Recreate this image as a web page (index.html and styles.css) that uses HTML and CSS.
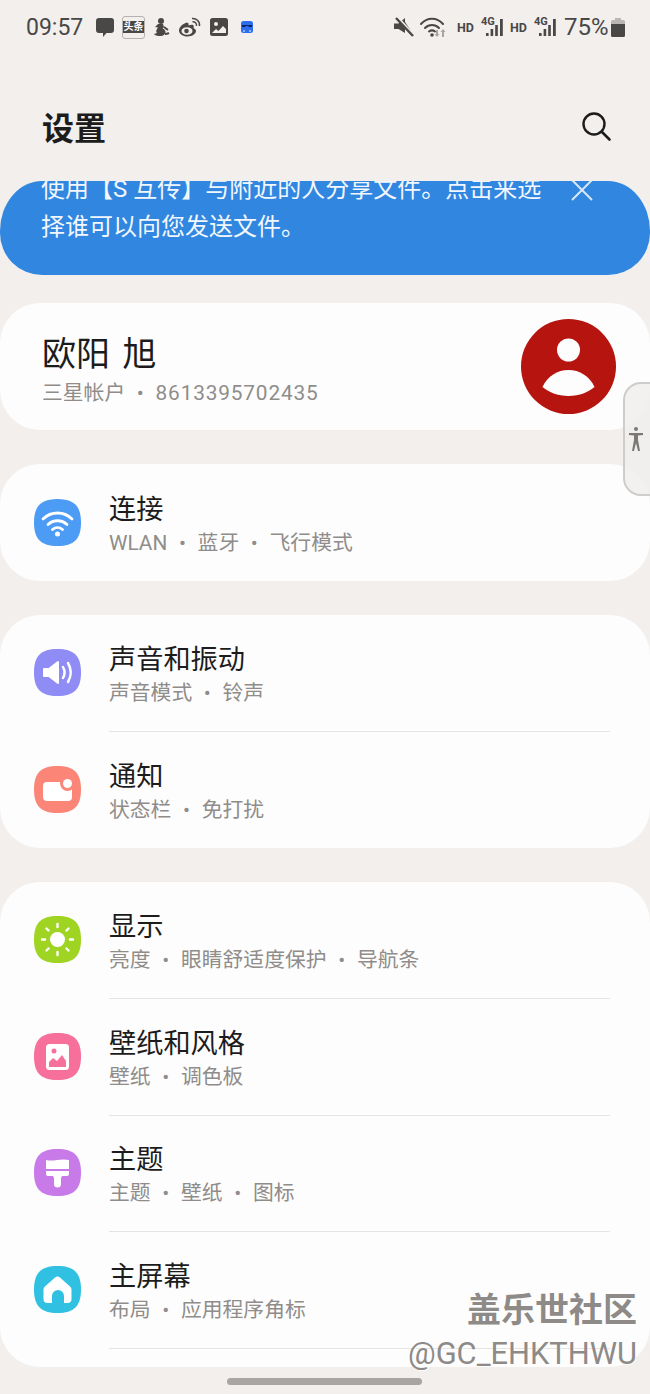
FILE: index.html
```html
<!DOCTYPE html>
<html lang="zh-CN">
<head>
  <meta charset="UTF-8" />
  <meta name="viewport" content="width=device-width, initial-scale=1.0"/>
  <title>设置</title>
  <link rel="stylesheet" href="styles.css">
</head>
<body>
  <div class="status-bar">
    <span class="time">09:57</span>
    <svg class="st-chat" width="18" height="19" viewBox="0 0 18 19"><path fill="#4a4747" d="M3 0h12a3 3 0 0 1 3 3v9a3 3 0 0 1-3 3h-4.500L7 19v-4H3a3 3 0 0 1-3-3V3a3 3 0 0 1 3-3z"/></svg>
    <span class="st-toutiao"><span>头条</span></span>
    <svg class="st-run" width="17" height="20" viewBox="0 0 17 20"><circle cx="8" cy="4" r="3" fill="#4a4747"/><path fill="#4a4747" d="M6 7h4l1 3-1.500 1.500c2 .5 3 2 3 3.500 0 2.500-2.500 4-5.500 4-2.500 0-5-.5-6-2l3-1c-1-1-1-2.500 0-4l1-1.500L2 10l3-3z"/><path fill="none" stroke="#4a4747" stroke-width="2" d="M11 10l4 3M12 17c2 0 3-.5 4-1"/></svg>
    <svg class="st-weibo" width="23" height="20" viewBox="0 0 23 20"><path fill="#4a4747" d="M9 5.500C5 6.500 1 10 1 13.500 1 17 5 19.500 9.500 19.500c5 0 8.500-3 8.500-5.500 0-2-2-2.500-2.500-3 .5-1.500.5-2.500-.5-3-1-.5-3 0-4.500.5.500-2-.5-3-1.500-2.500z"/><ellipse cx="9" cy="14" rx="5.500" ry="3.800" fill="#f2efed"/><circle cx="8.500" cy="14" r="2.300" fill="#4a4747"/><path fill="none" stroke="#4a4747" stroke-width="1.500" d="M14 1.500c4-.5 8 2.500 7.500 7.500M14.500 4.800c2.500-.3 4.300 1.500 4 4"/></svg>
    <svg class="st-image" width="18" height="18" viewBox="0 0 18 18"><rect width="18" height="18" rx="2.500" fill="#4a4747"/><circle cx="6" cy="6" r="2" fill="#f2efed"/><path fill="#f2efed" d="M2 15l4-4 2.500 2L13 8l3 3v4z"/></svg>
    <svg class="st-blue" width="12" height="12" viewBox="0 0 12 12"><rect width="12" height="12" rx="2.500" fill="#2f6df0"/><path fill="#10235e" d="M1 4h10v2H8.500L6 4.800 3.500 6H1z"/><path fill="#8fb4ff" d="M2 9h2v2H2zM8 9h2v2H8z"/></svg>
    <span class="spacer"></span>
    <svg class="st-mute" width="20" height="20" viewBox="0 0 20 20"><path fill="#4a4747" d="M0 6.500h4.500L11 1v15L4.500 12H0z"/><path fill="#4a4747" d="M11 5l6 9-2 1.500-4-5z"/><path stroke="#f2efed" stroke-width="3" d="M3 0l16 18"/><path stroke="#4a4747" stroke-width="2.400" d="M2 1l17 18"/></svg>
    <svg class="st-wifi" width="27" height="22" viewBox="0 0 27 22"><g fill="none" stroke="#4a4747" stroke-width="2" stroke-linecap="round"><path d="M1 8c6-7 16-7 22 0"/><path d="M5 12c4-4 10-4 14 0"/><path d="M9 15.500c2-1.500 4-1.500 6 0"/></g><circle cx="12" cy="19" r="1.800" fill="#4a4747"/><path fill="#a8a5a3" d="M16 14h2v4h1.500L17 21l-2.500-3H16zM22 21h2v-5h1.500L23 13l-2.500 3H22z"/></svg>
    <span class="st-hd first">HD</span>
    <span class="st-net">
      <span class="net-label">4G</span>
      <svg width="17" height="18" viewBox="0 0 17 18"><path fill="#4a4747" d="M0 15h2.600v3H0zM4.600 11h2.600v7H4.600zM9.200 7h2.600v11H9.200zM14 1h2.800v17H14z"/></svg>
    </span>
    <span class="st-hd">HD</span>
    <span class="st-net">
      <span class="net-label">4G</span>
      <svg width="17" height="18" viewBox="0 0 17 18"><path fill="#4a4747" d="M0 15h2.600v3H0zM4.600 11h2.600v7H4.600zM9.200 7h2.600v11H9.200zM14 1h2.800v17H14z"/></svg>
    </span>
    <span class="battery-text">75%</span>
    <svg class="st-battery" width="14" height="20" viewBox="0 0 14 20"><path fill="#b9b6b4" d="M4 1h6v2h2.500A1.500 1.500 0 0 1 14 4.500V8H0V4.500A1.500 1.500 0 0 1 1.500 3H4z"/><path fill="#4a4747" d="M0 7h14v11.500a1.500 1.500 0 0 1-1.500 1.500h-11A1.500 1.500 0 0 1 0 18.500z"/></svg>
  </div>

  <header class="title-row">
    <h1>设置</h1>
    <svg width="32" height="32" viewBox="0 0 32 32"><circle cx="14" cy="14" r="10.500" fill="none" stroke="#1c1c1c" stroke-width="2.400"/><path stroke="#1c1c1c" stroke-width="2.600" stroke-linecap="round" d="M22 22l7.500 7.500"/></svg>
  </header>

  <div class="banner">
    <p>使用【S 互传】与附近的人分享文件。点击来选择谁可以向您发送文件。</p>
    <svg class="banner-close" width="24" height="24" viewBox="0 0 24 24"><path stroke="#d8e8fa" stroke-width="2" d="M2 2l20 20M22 2L2 22"/></svg>
  </div>

  <section class="card profile">
    <div class="profile-text">
      <div class="profile-name">欧阳 旭</div>
      <div class="sub profile-sub">三星帐户 <i>•</i> <span class="num">8613395702435</span></div>
    </div>
    <svg width="95" height="95" viewBox="0 0 95 95"><circle cx="47.500" cy="47.500" r="47.500" fill="#b5140f"/><circle cx="47.500" cy="31" r="11.500" fill="#fdfdfd"/><path fill="#fdfdfd" d="M21.500 68c5-11 15-17 26-17s21 6 26 17c-6 5-15 9-26 9s-20-4-26-9z"/></svg>
  </section>

  <section class="card">
    <div class="row">
      <svg class="icon" viewBox="0 0 47 47"><path fill="#4c9bf5" d="M23.500 0C40 0 47 7 47 23.500S40 47 23.500 47 0 40 0 23.500 7 0 23.500 0z"/><g fill="none" stroke="#fff" stroke-width="2.800" stroke-linecap="round"><path d="M9 20c8-8 21-8 29 0"/><path d="M14 25.500c5.500-5 13.500-5 19 0"/><path d="M18.500 30.500c3-2.500 7-2.500 10 0"/></g><circle cx="23.500" cy="35" r="2.500" fill="#fff"/></svg>
      <div class="row-text">
        <div class="row-title">连接</div>
        <div class="sub">WLAN <i>•</i> 蓝牙 <i>•</i> 飞行模式</div>
      </div>
    </div>
  </section>

  <section class="card">
    <div class="row">
      <svg class="icon" viewBox="0 0 47 47"><path fill="#8f8cf5" d="M23.500 0C40 0 47 7 47 23.500S40 47 23.500 47 0 40 0 23.500 7 0 23.500 0z"/><path fill="#fff" stroke="#fff" stroke-width="2" stroke-linejoin="round" d="M10 20h5l9-7v21l-9-7h-5z"/><g fill="none" stroke="#fff" stroke-width="2.500" stroke-linecap="round"><path d="M29 18c2 3.500 2 7.500 0 11"/><path d="M34 14c3.500 6 3.500 13 0 19"/></g></svg>
      <div class="row-text">
        <div class="row-title">声音和振动</div>
        <div class="sub">声音模式 <i>•</i> 铃声</div>
      </div>
    </div>
    <div class="row">
      <svg class="icon" viewBox="0 0 47 47"><path fill="#fb8678" d="M23.500 0C40 0 47 7 47 23.500S40 47 23.500 47 0 40 0 23.500 7 0 23.500 0z"/><path fill="#fff" d="M13 16h21a4 4 0 0 1 4 4v11a4 4 0 0 1-4 4H13a4 4 0 0 1-4-4V20a4 4 0 0 1 4-4z"/><circle cx="33.500" cy="17.500" r="7.500" fill="#fb8678"/><circle cx="33.500" cy="17.500" r="4.500" fill="#fff"/></svg>
      <div class="row-text">
        <div class="row-title">通知</div>
        <div class="sub">状态栏 <i>•</i> 免打扰</div>
      </div>
    </div>
  </section>

  <section class="card last">
    <div class="row">
      <svg class="icon" viewBox="0 0 47 47"><path fill="#a0d423" d="M23.500 0C40 0 47 7 47 23.500S40 47 23.500 47 0 40 0 23.500 7 0 23.500 0z"/><circle cx="23.500" cy="23.500" r="7.500" fill="#fff"/><g stroke="#fff" stroke-width="2.400" stroke-linecap="round"><path d="M23.500 8v3M23.500 36v3M8 23.500h3M36 23.500h3M12.500 12.500l2 2M32.500 32.500l2 2M34.500 12.500l-2 2M14.500 32.500l-2 2"/></g></svg>
      <div class="row-text">
        <div class="row-title">显示</div>
        <div class="sub">亮度 <i>•</i> 眼睛舒适度保护 <i>•</i> 导航条</div>
      </div>
    </div>
    <div class="row">
      <svg class="icon" viewBox="0 0 47 47"><path fill="#f6709b" d="M23.500 0C40 0 47 7 47 23.500S40 47 23.500 47 0 40 0 23.500 7 0 23.500 0z"/><rect x="12" y="11" width="23" height="26" rx="3.500" fill="#fff"/><circle cx="20" cy="18" r="2.500" fill="#f6709b"/><path fill="#f6709b" d="M15 34v-5l4-4 4 3 5-6 4 6v6z"/></svg>
      <div class="row-text">
        <div class="row-title">壁纸和风格</div>
        <div class="sub">壁纸 <i>•</i> 调色板</div>
      </div>
    </div>
    <div class="row">
      <svg class="icon" viewBox="0 0 47 47"><path fill="#c77ae8" d="M23.500 0C40 0 47 7 47 23.500S40 47 23.500 47 0 40 0 23.500 7 0 23.500 0z"/><path fill="#fff" d="M12 11c7 2 15-2 23 0v9H12zM12 22h23v3a2 2 0 0 1-2 2h-5l-1 2v6a3.500 3.500 0 0 1-7 0v-6l-1-2h-5a2 2 0 0 1-2-2z"/></svg>
      <div class="row-text">
        <div class="row-title">主题</div>
        <div class="sub">主题 <i>•</i> 壁纸 <i>•</i> 图标</div>
      </div>
    </div>
    <div class="row">
      <svg class="icon" viewBox="0 0 47 47"><path fill="#2fc0e2" d="M23.500 0C40 0 47 7 47 23.500S40 47 23.500 47 0 40 0 23.500 7 0 23.500 0z"/><path fill="#fff" d="M21 11.500a4 4 0 0 1 5 0l10 9a4 4 0 0 1 1.500 3V33a4 4 0 0 1-4 4h-3.500v-7a6 6 0 0 0-12 0v7h-4.500a4 4 0 0 1-4-4v-9.500a4 4 0 0 1 1.500-3z"/></svg>
      <div class="row-text">
        <div class="row-title">主屏幕</div>
        <div class="sub">布局 <i>•</i> 应用程序角标</div>
      </div>
    </div>
    <div class="row"></div>
  </section>

  <div class="side-tab">
    <svg width="16" height="26" viewBox="0 0 16 26"><circle cx="8" cy="3" r="2" fill="#7b7876"/><path fill="#7b7876" d="M1 7h14v2l-5 .5V14l2 11h-2l-2-8-2 8H4l2-11V9.500L1 9z"/></svg>
  </div>

  <div class="watermark">
    <div class="wm-cn">盖乐世社区</div>
    <div class="wm-id">@GC_EHKTHWU</div>
  </div>

  <div class="home-pill"></div>
</body>
</html>
```

FILE: styles.css
```css
body {
  margin: 0;
  height: 1394px;
  overflow: hidden;
  position: relative;
  background: #f2efed;
  color: #1c1c1c;
  font-family: Roboto, "Noto Sans CJK SC", sans-serif;
}

.status-bar {
  display: flex;
  align-items: center;
  height: 54px;
  padding: 0 25px 0 26px;
  color: #4a4747;
}

.status-bar svg {
  flex: none;
}

.time {
  font-size: 23px;
  width: 59px;
}

.spacer {
  flex: 1;
}

.st-chat { margin-left: 11px; }
.st-run { margin-left: 8px; }
.st-weibo { margin-left: 8px; }
.st-image { margin-left: 9px; }
.st-blue { margin-left: 13px; }
.st-wifi { margin-left: 6px; }
.st-battery { margin-left: 4px; }

.st-toutiao {
  box-sizing: border-box;
  display: flex;
  align-items: center;
  justify-content: center;
  width: 23px;
  height: 23px;
  margin-left: 8px;
  border: 1px solid #b5b2b0;
  border-radius: 3px;
}

.st-toutiao span {
  background: #4a4747;
  color: #fff;
  font-size: 10px;
  font-weight: 700;
  line-height: 12px;
  width: 21px;
  text-align: center;
  white-space: nowrap;
}

.st-hd {
  font-size: 12.500px;
  font-weight: 700;
  width: 16px;
  margin-left: 7px;
}

.st-hd.first {
  margin-left: 10px;
}

.st-net {
  position: relative;
  display: flex;
  width: 23px;
  margin-left: 7px;
  justify-content: flex-end;
}

.net-label {
  position: absolute;
  left: 1px;
  top: -3px;
  font-size: 11px;
  line-height: 13px;
  font-weight: 700;
}

.battery-text {
  font-size: 24px;
  width: 43px;
  margin-left: 8px;
  white-space: nowrap;
}

.title-row {
  display: flex;
  align-items: center;
  justify-content: space-between;
  height: 68px;
  margin-top: 38px;
  padding: 0 38px 0 42px;
}

.title-row h1 {
  margin: 0;
  font-size: 32px;
  font-weight: 700;
}

.banner {
  position: relative;
  box-sizing: border-box;
  height: 94px;
  margin-top: 21px;
  overflow: hidden;
  background: #3186e0;
  border-radius: 42px 42px 42px 42px / 50px 50px 42px 42px;
  color: #f2f7fd;
}

.banner p {
  width: 505px;
  margin: -11px 0 0 41px;
  font-size: 24px;
  line-height: 38px;
}

.banner-close {
  position: absolute;
  right: 56px;
  top: -3px;
}

.card {
  margin-top: 34px;
  background: #fdfdfd;
  border-radius: 40px;
  overflow: hidden;
}

.profile {
  display: flex;
  align-items: center;
  justify-content: space-between;
  height: 127px;
  margin-top: 28px;
  padding: 0 34px 0 42px;
  box-sizing: border-box;
}

.profile svg {
  flex: none;
  margin-top: -1px;
}

.profile-text {
  margin-top: 6px;
}

.profile-name {
  font-size: 34px;
  line-height: 40px;
  word-spacing: 4px;
}

.profile-sub {
  margin-top: 6px;
}

.num {
  letter-spacing: 0.850px;
}

.sub {
  font-size: 20.800px;
  line-height: 26px;
  color: #8f8c8a;
}

.sub i {
  font-style: normal;
  margin: 0 6.500px;
}

.row {
  position: relative;
  display: flex;
  align-items: center;
  height: 116.500px;
  padding-left: 34px;
}

.row + .row::before {
  content: "";
  position: absolute;
  left: 109px;
  right: 40px;
  top: 0;
  height: 1px;
  background: #e6e4e2;
}

.icon {
  width: 47px;
  height: 47px;
  flex: none;
}

.row-text {
  margin-left: 28px;
  margin-top: 3px;
}

.row-title {
  font-size: 27.200px;
  line-height: 36px;
  margin-bottom: 2px;
}

.last {
  height: 485px;
}

.side-tab {
  position: absolute;
  left: 623px;
  top: 382px;
  box-sizing: border-box;
  width: 34px;
  height: 114px;
  display: flex;
  align-items: center;
  padding-left: 3px;
  background: rgba(240, 238, 236, 0.85);
  border: 2px solid #cfcdcb;
  border-radius: 18px 0 0 18px;
}

.watermark {
  position: absolute;
  right: 13px;
  top: 1289px;
  text-align: right;
  color: #8d8a88;
  text-shadow: 1px 1px 0 rgba(255, 255, 255, 0.7);
}

.wm-cn {
  font-size: 34px;
  font-weight: 700;
  line-height: 42px;
}

.wm-id {
  font-size: 30.800px;
  line-height: 34px;
  margin-top: 6px;
}

.home-pill {
  position: absolute;
  left: 227px;
  top: 1378px;
  width: 195px;
  height: 7px;
  border-radius: 4px;
  background: #a9a5a3;
}
```
